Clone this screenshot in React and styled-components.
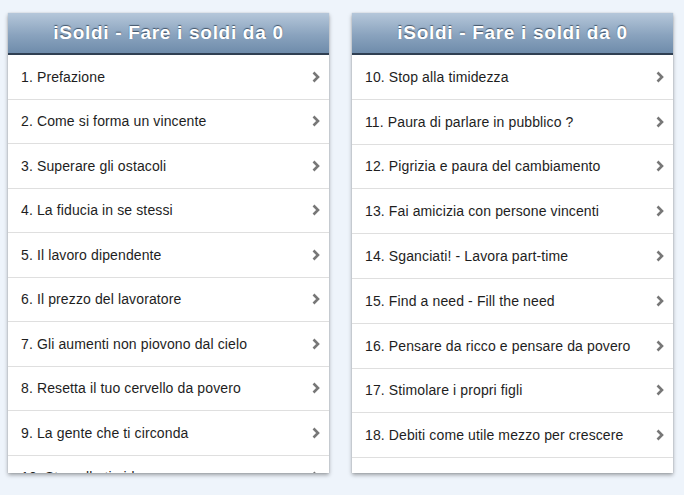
import React from 'react';
import styled, { createGlobalStyle } from 'styled-components';

const GlobalStyle = createGlobalStyle`
  html, body {
    margin: 0;
    padding: 0;
    background: #eef4fb;
    font-family: "Liberation Sans", Arial, sans-serif;
  }
`;

const Page = styled.div`
  display: flex;
  gap: 23px;
  padding: 13px 0 0 8px;
  height: 495px;
  box-sizing: border-box;
`;

const Panel = styled.div`
  width: 321px;
  height: 460px;
  background: #fff;
  display: flex;
  flex-direction: column;
  overflow: hidden;
  box-shadow: 0 2px 4px rgba(0, 0, 0, 0.35), 0 0 1px rgba(0, 0, 0, 0.2);
`;

const Header = styled.div`
  flex: 0 0 auto;
  height: 40px;
  display: flex;
  align-items: center;
  justify-content: center;
  background: linear-gradient(#b5c7da, #8aa3be 55%, #6f8cab);
  border-bottom: 2px solid #2f3f52;
  color: #fff;
  font-size: 19px;
  letter-spacing: 0.7px;
  font-weight: bold;
  text-shadow: 0 -1px 1px rgba(30, 45, 65, 0.7);
`;

const List = styled.ul`
  margin: 0;
  padding: 0;
  list-style: none;
`;

const Row = styled.li`
  display: flex;
  align-items: center;
  justify-content: space-between;
  box-sizing: border-box;
  height: ${p => p.h}px;
  padding: 0 9px 0 13px;
  border-bottom: 1px solid #dfdfdf;
  font-size: 14px;
  letter-spacing: 0.12px;
  color: #1e1e1e;
`;

const Chevron = () => (
  <svg width="8" height="12" viewBox="0 0 8 12">
    <path d="M1.5 1.5 L6 6 L1.5 10.5" fill="none" stroke="#777" strokeWidth="2.6" />
  </svg>
);

const left = [
  '1. Prefazione',
  '2. Come si forma un vincente',
  '3. Superare gli ostacoli',
  '4. La fiducia in se stessi',
  '5. Il lavoro dipendente',
  '6. Il prezzo del lavoratore',
  '7. Gli aumenti non piovono dal cielo',
  '8. Resetta il tuo cervello da povero',
  '9. La gente che ti circonda',
  '10. Stop alla timidezza',
];

const right = [
  '10. Stop alla timidezza',
  '11. Paura di parlare in pubblico ?',
  '12. Pigrizia e paura del cambiamento',
  '13. Fai amicizia con persone vincenti',
  '14. Sganciati! - Lavora part-time',
  '15. Find a need - Fill the need',
  '16. Pensare da ricco e pensare da povero',
  '17. Stimolare i propri figli',
  '18. Debiti come utile mezzo per crescere',
  '',
];

const Screen = ({ items, rowHeight }) => (
  <Panel>
    <Header>iSoldi - Fare i soldi da 0</Header>
    <List>
      {items.map((label, i) => (
        <Row key={i} h={rowHeight}>
          <span>{label}</span>
          {label && <Chevron />}
        </Row>
      ))}
    </List>
  </Panel>
);

export default function App() {
  return (
    <Page>
      <GlobalStyle />
      <Screen items={left} rowHeight={44.5} />
      <Screen items={right} rowHeight={44.8} />
    </Page>
  );
}
